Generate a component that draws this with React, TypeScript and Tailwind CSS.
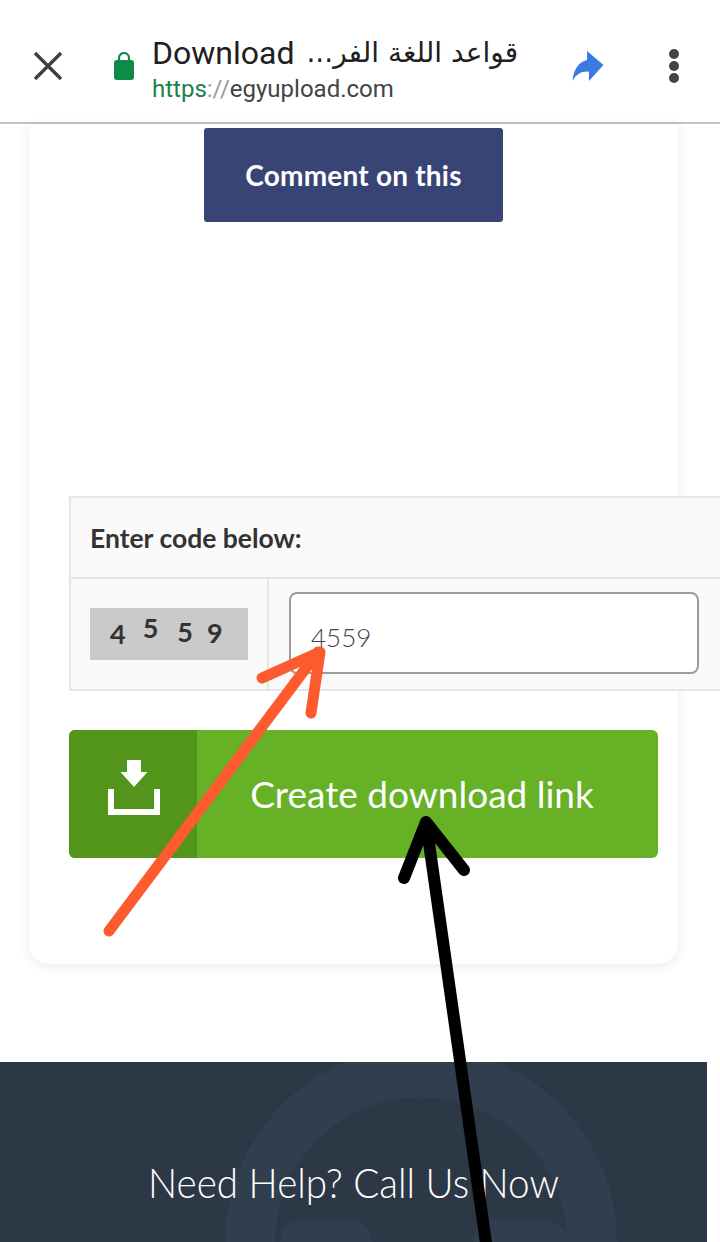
export default function App() {
  const display = { fontFamily: 'Lato, "Noto Sans", sans-serif' };
  return (
    <div className="relative h-[1242px] w-[720px] overflow-hidden bg-white" style={display}>
      <header className="flex h-[124px] items-center border-b-2 border-[#c4c4c4] bg-white pt-[10px] font-['Roboto',sans-serif]">
        <svg className="ml-[34px] h-[28px] w-[28px] shrink-0" viewBox="0 0 28 28" fill="none" stroke="#3f3f3f" strokeWidth="3.4">
          <path d="M1 1 27 27M27 1 1 27" />
        </svg>
        <svg className="ml-[52px] h-[28px] w-[20px] shrink-0" viewBox="0 0 20 28" fill="none">
          <path d="M5 10V6a5 5 0 0 1 10 0V10" stroke="#0f8a4b" strokeWidth="2.2" />
          <rect y="8" width="20" height="20" rx="3" fill="#0f8a4b" />
        </svg>
        <div className="ml-[18px] flex w-[380px] flex-col">
          <div className="mt-[3px] flex h-[44px] items-center gap-[12px] whitespace-nowrap text-[32px] leading-[44px] text-[#202020]">
            <span>Download</span>
            <span dir="rtl" className="font-['DejaVu_Sans',sans-serif] text-[28px]">قواعد اللغة الفر...</span>
          </div>
          <div className="-mt-[1px] text-[24px] leading-[30px]">
            <span className="text-[#1c7f4c]">https</span>
            <span className="text-[#9a9a9a]">://</span>
            <span className="text-[#444444]">egyupload.com</span>
          </div>
        </div>
        <svg className="ml-[40px] h-[30px] w-[32px] shrink-0" viewBox="0 0 34 32" fill="#3b7ae3">
          <path d="M16 0 33.5 15 18 32V22C10 21.5 4 25 0.5 32 1 21 7 11 16 9.5Z" />
        </svg>
        <div className="ml-[65px] flex shrink-0 flex-col gap-[2px]">
          <span className="h-[10px] w-[10px] rounded-full bg-[#444444]" />
          <span className="h-[10px] w-[10px] rounded-full bg-[#444444]" />
          <span className="h-[10px] w-[10px] rounded-full bg-[#444444]" />
        </div>
      </header>

      <main className="ml-[29px] flex h-[840px] w-[649px] flex-col rounded-b-[20px] bg-white shadow-[0_2px_12px_rgba(0,0,0,0.09)]">
        <button className="mx-auto mt-[4px] h-[94px] w-[299px] shrink-0 rounded-[3px] bg-[#394476] text-[28px] font-bold tracking-[0.2px] text-white">
          Comment on this
        </button>

        <section className="ml-[40px] mt-[274px] w-[690px] shrink-0 border-2 border-[#e6e6e6] bg-[#fafafa]">
          <div className="flex h-[81px] items-center border-b-2 border-[#e6e6e6] pl-[19px] pt-[2px] text-[26.5px] font-bold text-[#333333]">
            Enter code below:
          </div>
          <div className="flex h-[110px]">
            <div className="flex w-[198px] shrink-0 items-center border-r-2 border-[#e6e6e6] pl-[19px]">
              <div className="flex h-[52px] w-[158px] bg-[#cacaca] pl-[20px] text-[27px] font-bold leading-none text-[#333333]">
                <span className="mt-[12px]">4</span>
                <span className="ml-[17px] mt-[6px]">5</span>
                <span className="ml-[19px] mt-[10px]">5</span>
                <span className="ml-[14px] mt-[11px]">9</span>
              </div>
            </div>
            <div className="pl-[20px] pt-[13px]">
              <div className="flex h-[82px] w-[410px] items-center rounded-[8px] border-2 border-[#9c9c9c] bg-white pl-[20px] pt-[8px] text-[26px] font-light text-[#444444]">
                4559
              </div>
            </div>
          </div>
        </section>

        <button className="ml-[40px] mt-[39px] flex h-[128px] w-[589px] shrink-0 overflow-hidden rounded-[6px] bg-[#66b126] text-white">
          <span className="flex h-full w-[128px] shrink-0 items-center justify-center bg-[#53951a]">
            <svg className="mb-[13px] ml-[2px] h-[55px] w-[52px]" viewBox="0 0 52 55" fill="#ffffff">
              <path d="M19 0H33V12H39.5L26 27 12.5 12H19Z" />
              <path d="M0 29H6V49H46V29H52V55H0Z" />
            </svg>
          </span>
          <span className="flex-1 pr-[11px] text-center text-[37px] leading-[128px]">Create download link</span>
        </button>
      </main>

      <footer className="relative mt-[98px] h-[180px] w-[707px] overflow-hidden bg-[#2c3846] text-white">
        <svg className="absolute left-0 top-0 h-[180px] w-[707px]" viewBox="0 0 707 180" fill="none">
          <circle cx="421" cy="181" r="171" stroke="#303e4e" strokeWidth="50" />
          <rect x="280" y="158" width="92" height="60" rx="22" fill="#303e4e" />
          <rect x="473" y="158" width="94" height="60" rx="22" fill="#303e4e" />
        </svg>
        <p className="relative scale-x-[0.92] pt-[92px] text-center text-[42px] font-light leading-[56px]">Need Help? Call Us Now</p>
      </footer>

      <svg className="pointer-events-none absolute left-0 top-0 h-[1242px] w-[720px]" viewBox="0 0 720 1242" fill="none" strokeLinecap="round" strokeLinejoin="round">
        <path d="M109 931 318 652M262 678 320 652 311 713" stroke="#fe5a2f" strokeWidth="11" />
        <path d="M487 1250 426 822M404 878 426 822 464 870" stroke="#000000" strokeWidth="12" />
      </svg>
    </div>
  );
}
